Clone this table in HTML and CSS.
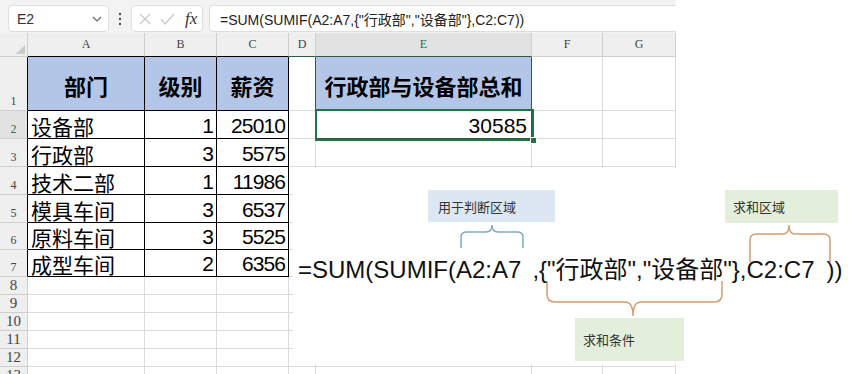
FILE: index.html
```html
<!DOCTYPE html>
<html lang="zh-CN">
<head>
<meta charset="utf-8">
<title>SUMIF</title>
<link rel="stylesheet" href="styles.css">
</head>
<body>
<div class="app">
  <div class="toolbar">
    <div class="namebox"><span>E2</span>
      <svg width="10" height="6" viewBox="0 0 10 6"><path d="M1 1 L5 5 L9 1" fill="none" stroke="#666" stroke-width="1.2"/></svg>
    </div>
    <div class="dots"><svg width="4" height="14" viewBox="0 0 4 14"><circle cx="2" cy="2" r="1.2" fill="#555"/><circle cx="2" cy="7" r="1.2" fill="#555"/><circle cx="2" cy="12" r="1.2" fill="#555"/></svg></div>
    <div class="fxbox">
      <svg width="14" height="14" viewBox="0 0 14 14"><path d="M2 2 L12 12 M12 2 L2 12" stroke="#c9c9c9" stroke-width="1.3" fill="none"/></svg>
      <svg width="15" height="14" viewBox="0 0 15 14"><path d="M1 7 L5 12 L14 2" stroke="#c9c9c9" stroke-width="1.3" fill="none"/></svg>
      <span class="fx">fx</span>
    </div>
    <div class="formula">=SUM(SUMIF(A2:A7,{"行政部","设备部"},C2:C7))</div>
  </div>
  <div class="sheet">
    <!-- header row -->
    <div class="c ch corner"><span class="tri"></span></div>
    <div class="c ch bbk">A</div>
    <div class="c ch bbk">B</div>
    <div class="c ch bbk">C</div>
    <div class="c ch bge">D</div>
    <div class="c ch selh bge">E</div>
    <div class="c ch">F</div>
    <div class="c ch">G</div>
    <!-- row 1 -->
    <div class="c rh brk">1</div>
    <div class="c tb hd">部门</div>
    <div class="c tb hd">级别</div>
    <div class="c tb hd">薪资</div>
    <div class="c bge"></div>
    <div class="c hd ge">行政部与设备部总和</div>
    <div class="c"></div>
    <div class="c"></div>
    <!-- row 2 -->
    <div class="c rh selh brk">2</div>
    <div class="c tb txt">设备部</div>
    <div class="c tb num">1</div>
    <div class="c tb num">25010</div>
    <div class="c bge"></div>
    <div class="c num big ge">30585</div>
    <div class="c"></div>
    <div class="c"></div>
    <!-- row 3 -->
    <div class="c rh brk">3</div>
    <div class="c tb txt">行政部</div>
    <div class="c tb num">3</div>
    <div class="c tb num">5575</div>
    <div class="c"></div><div class="c"></div><div class="c"></div><div class="c"></div>
    <!-- row 4 -->
    <div class="c rh brk">4</div>
    <div class="c tb txt">技术二部</div>
    <div class="c tb num">1</div>
    <div class="c tb num">11986</div>
    <div class="c"></div><div class="c"></div><div class="c"></div><div class="c"></div>
    <!-- row 5 -->
    <div class="c rh brk">5</div>
    <div class="c tb txt">模具车间</div>
    <div class="c tb num">3</div>
    <div class="c tb num">6537</div>
    <div class="c"></div><div class="c"></div><div class="c"></div><div class="c"></div>
    <!-- row 6 -->
    <div class="c rh brk">6</div>
    <div class="c tb txt">原料车间</div>
    <div class="c tb num">3</div>
    <div class="c tb num">5525</div>
    <div class="c"></div><div class="c"></div><div class="c"></div><div class="c"></div>
    <!-- row 7 -->
    <div class="c rh brk">7</div>
    <div class="c tb txt">成型车间</div>
    <div class="c tb num">2</div>
    <div class="c tb num">6356</div>
    <div class="c"></div><div class="c"></div><div class="c"></div><div class="c"></div>
    <!-- rows 8-13 -->
    <div class="c rh lg">8</div>
    <div class="c"></div><div class="c"></div><div class="c"></div><div class="c"></div><div class="c"></div><div class="c"></div><div class="c"></div>
    <div class="c rh lg">9</div>
    <div class="c"></div><div class="c"></div><div class="c"></div><div class="c"></div><div class="c"></div><div class="c"></div><div class="c"></div>
    <div class="c rh lg">10</div>
    <div class="c"></div><div class="c"></div><div class="c"></div><div class="c"></div><div class="c"></div><div class="c"></div><div class="c"></div>
    <div class="c rh lg">11</div>
    <div class="c"></div><div class="c"></div><div class="c"></div><div class="c"></div><div class="c"></div><div class="c"></div><div class="c"></div>
    <div class="c rh lg">12</div>
    <div class="c"></div><div class="c"></div><div class="c"></div><div class="c"></div><div class="c"></div><div class="c"></div><div class="c"></div>
    <div class="c rh lg">13</div>
    <div class="c"></div><div class="c"></div><div class="c"></div><div class="c"></div><div class="c"></div><div class="c"></div><div class="c"></div>
  </div>
</div>
<div class="selbox"><span class="handle"></span></div>

<div class="overlay">
  <svg class="braces" width="557" height="196" viewBox="0 0 557 196">
    <g transform="translate(-293,-168)" fill="none" stroke-width="1.5">
      <path d="M461,248 V237 Q461,232 467,232 H486 Q492,232 492,225 Q492,232 498,232 H517 Q523,232 523,237 V248" stroke="#80aac6"/>
      <path d="M750,262 V240 Q750,234 757,234 H783 Q789,234 789,225 Q789,234 795,234 H823 Q830,234 830,240 V262" stroke="#d49d72"/>
      <path d="M547,281 V294 Q547,302 555,302 H625 Q633,302 633,316 Q633,302 641,302 H714 Q722,302 722,294 V281" stroke="#d49d72"/>
    </g>
  </svg>
  <div class="note blue n1">用于判断区域</div>
  <div class="note green n2">求和区域</div>
  <div class="note green n3">求和条件</div>
  <div class="bigformula"><span>=SUM(SUMIF(A2:A7</span><span class="g1">,{"<span class="cjk">行政部</span>","<span class="cjk">设备部</span>"},C2:C7</span><span class="g2">))</span></div>
</div>
</body>
</html>
```

FILE: styles.css
```css
* { box-sizing: border-box; margin: 0; padding: 0; }
html, body { width: 850px; height: 374px; overflow: hidden; background: #fff; }
body {
  position: relative;
  font-family: "Liberation Sans", "Noto Sans CJK SC", sans-serif;
  color: #000;
}
.app { width: 676px; height: 374px; overflow: hidden; background: #f3f3f3; }

.toolbar {
  display: flex;
  align-items: center;
  height: 33px;
  padding: 5px 0 1px 8px;
}
.namebox {
  width: 101px; height: 27px;
  background: #fff;
  border: 1px solid #dedede;
  border-radius: 4px;
  display: flex; align-items: center; justify-content: space-between;
  padding: 0 6px 0 8px;
  font-size: 14px; color: #333;
}
.dots { width: 22px; display: flex; justify-content: center; align-items: center; }
.fxbox {
  width: 72px; height: 27px;
  background: #fff;
  border: 1px solid #dedede;
  border-radius: 4px;
  display: flex; align-items: center;
  padding-left: 6px; gap: 8px;
}
.fx {
  font-family: "Liberation Serif", serif;
  font-style: italic;
  font-size: 17px;
  color: #333;
  margin-left: 2px;
}
.formula {
  flex: 1; height: 27px;
  margin-left: 6px;
  background: #fff;
  border: 1px solid #dedede;
  border-right: none;
  border-radius: 4px 0 0 4px;
  padding-left: 10px;
  display: flex; align-items: center;
  font-size: 14px; color: #222;
  white-space: nowrap;
}

.sheet {
  display: grid;
  grid-template-columns: 28px 117px 72px 72px 27px 216px 71px 73px;
  grid-template-rows: 24px 54px 28px 28px 28px 28px 27px 27px repeat(6, 18px);
  background: #fff;
}
.c {
  border-right: 1px solid #dadada;
  border-bottom: 1px solid #dadada;
  display: flex;
  overflow: hidden;
  white-space: nowrap;
  position: relative;
}
.ch {
  background: #efefef;
  border-color: #cecece;
  justify-content: center; align-items: center;
  font-family: "Liberation Serif", serif;
  font-size: 12px; color: #444;
}
.rh {
  background: #efefef;
  border-color: #cecece;
  justify-content: center; align-items: flex-end;
  padding-bottom: 1px;
  font-family: "Liberation Serif", serif;
  font-size: 12px; color: #444;
}
.rh.lg { font-size: 15px; align-items: center; padding-bottom: 0; }
.corner .tri {
  position: absolute; right: 2px; bottom: 2px;
  width: 0; height: 0;
  border-left: 9px solid transparent;
  border-bottom: 9px solid #cbcbcb;
}
.selh { background: #e2e2e2; color: #217346; }
.bbk { border-bottom-color: #000; }
.brk { border-right-color: #000; }
.bge { border-right-color: #2c5c43; }
.ch.bge { border-right-color: #cecece; border-bottom-color: #2c5c43; }
.ch.selh.bge { border-bottom-color: #2c5c43; }
.tb { border-right-color: #000; border-bottom-color: #000; }
.ge { border-right-color: #2c5c43; border-bottom-color: #2c5c43; }

.hd {
  background: #b4c6e7;
  justify-content: center; align-items: center;
  padding-top: 3px;
  font-family: "Noto Sans CJK SC", sans-serif;
  font-weight: 700;
  font-size: 22px;
}
.txt {
  align-items: flex-end;
  padding-left: 3px;
  font-family: "Noto Sans CJK SC", sans-serif;
  font-size: 21px;
  line-height: 24px;
}
.num {
  justify-content: flex-end; align-items: flex-end;
  padding-right: 3px;
  font-size: 21px;
  letter-spacing: -0.9px;
  line-height: 24px;
}
.num.big { letter-spacing: 0; padding-right: 4px; }

.selbox {
  position: absolute;
  left: 315px; top: 109px;
  width: 219px; height: 32px;
  border: 2px solid #217346;
}
.handle {
  position: absolute;
  right: -5px; bottom: -5px;
  width: 7px; height: 7px;
  background: #217346;
  border: 1px solid #fff;
}

.overlay {
  position: absolute;
  left: 293px; top: 168px;
  width: 557px; height: 196px;
  background: #fff;
}
.braces { position: absolute; left: 0; top: 0; }
.note {
  position: absolute;
  display: flex; align-items: center;
  font-family: "Noto Sans CJK SC", sans-serif;
  font-size: 13px; color: #333;
}
.blue { background: #dde7f3; }
.green { background: #e3efdc; }
.n1 { left: 135px; top: 22px; width: 127px; height: 32px; padding-left: 10px; }
.n2 { left: 432px; top: 22px; width: 113px; height: 33px; padding-left: 8px; }
.n3 { left: 282px; top: 150px; width: 109px; height: 43px; padding-left: 8px; }
.bigformula {
  position: absolute;
  left: 5px; top: 86px;
  font-size: 24px; line-height: 28px;
  white-space: nowrap;
  color: #111;
}
.bigformula .g1 { margin-left: 11px; }
.bigformula .g2 { margin-left: 12px; }
.bigformula .cjk { font-family: "Noto Sans CJK SC", sans-serif; font-size: 24px; }
```
